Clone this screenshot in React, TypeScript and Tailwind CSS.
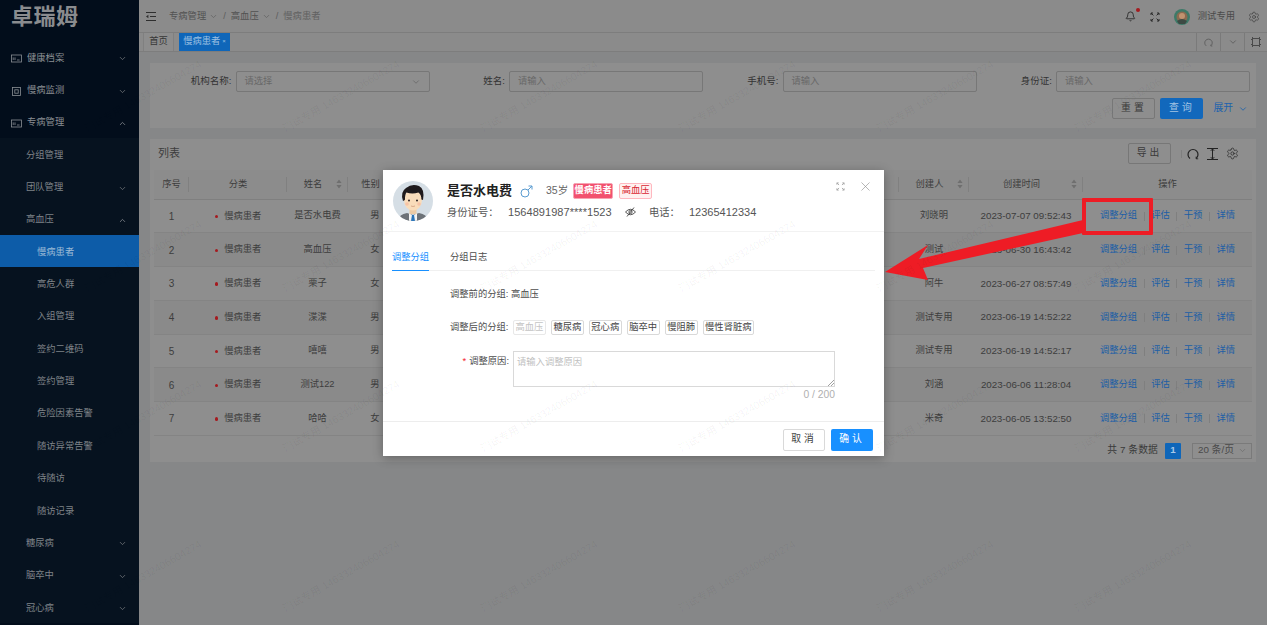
import React from "react";
import { ChevronDown, ChevronUp, X, Bell, Settings } from "lucide-react";

const FONT = '"Liberation Sans","Noto Sans CJK SC",sans-serif';

function CardIcon({ kind }: { kind: number }) {
  return (
    <svg width="11" height="9" viewBox="0 0 11 9" fill="none" stroke="#8b8f94" strokeWidth="0.8" className="shrink-0">
      {kind === 1 ? (
        <>
          <rect x="1.5" y="0.5" width="8" height="8" />
          <rect x="3.8" y="2.8" width="3.4" height="3.4" />
        </>
      ) : (
        <>
          <rect x="0.5" y="1" width="10" height="7" />
          <path d="M2.2 6V3.4M4 6V3.4M6 6h2.6" />
        </>
      )}
    </svg>
  );
}

const menu: { t: string; lv: number; icon?: number; arrow?: "d" | "u"; active?: boolean }[] = [
  { t: "健康档案", lv: 0, icon: 0, arrow: "d" },
  { t: "慢病监测", lv: 0, icon: 1, arrow: "d" },
  { t: "专病管理", lv: 0, icon: 0, arrow: "u" },
  { t: "分组管理", lv: 1 },
  { t: "团队管理", lv: 1, arrow: "d" },
  { t: "高血压", lv: 1, arrow: "u" },
  { t: "慢病患者", lv: 2, active: true },
  { t: "高危人群", lv: 2 },
  { t: "入组管理", lv: 2 },
  { t: "签约二维码", lv: 2 },
  { t: "签约管理", lv: 2 },
  { t: "危险因素告警", lv: 2 },
  { t: "随访异常告警", lv: 2 },
  { t: "待随访", lv: 2 },
  { t: "随访记录", lv: 2 },
  { t: "糖尿病", lv: 1, arrow: "d" },
  { t: "脑卒中", lv: 1, arrow: "d" },
  { t: "冠心病", lv: 1, arrow: "d" },
];

function Sidebar() {
  return (
    <aside className="w-[139px] shrink-0 h-full bg-[#020d1b] overflow-hidden flex flex-col">
      <div className="h-[41px] shrink-0 pl-[11px] pb-[7px] flex items-center text-[22px] leading-none font-bold text-[#8a8c8f] tracking-[0.5px]">
        卓瑞姆
      </div>
      {menu.map((m, i) => (
        <div
          key={i}
          className={
            "h-[32.35px] shrink-0 flex items-center pt-[3px] text-[9.3px] " +
            (m.active ? "bg-[#0d5ca8] text-[#9dbbd6] " : i < 3 ? "text-[#8b8f94] " : "bg-[#06121f] text-[#7f8388] ") +
            (m.lv === 0 ? "pl-[11px]" : m.lv === 1 ? "pl-[26px]" : "pl-[37px]")
          }
        >
          {m.icon !== undefined && (
            <span className="mr-[5px] flex">
              <CardIcon kind={m.icon} />
            </span>
          )}
          <span className="flex-1">{m.t}</span>
          {m.arrow === "d" && <ChevronDown size={9} className="mr-[12px] text-[#75797e]" />}
          {m.arrow === "u" && <ChevronUp size={9} className="mr-[12px] text-[#8b8f94]" />}
        </div>
      ))}
    </aside>
  );
}

function Expand({ c, s = 10 }: { c: string; s?: number }) {
  return (
    <svg width={s} height={s} viewBox="0 0 10 10" fill="none" stroke={c} strokeWidth="1">
      <path d="M1 3V1h2M1 1l2.4 2.4M9 3V1H7M9 1L6.6 3.4M1 7v2h2M1 9l2.4-2.4M9 7v2H7M9 9L6.6 6.6" />
    </svg>
  );
}

function Reload({ c, s = 12 }: { c: string; s?: number }) {
  return (
    <svg width={s} height={s} viewBox="0 0 12 12" fill="none" stroke={c} strokeWidth="1.2">
      <path d="M3 10.5A5 5 0 1 1 9 10.5" />
      <path d="M9.2 8.6v2.2h2" strokeWidth="0.9" />
    </svg>
  );
}

function TopBar() {
  return (
    <header className="h-[32px] shrink-0 bg-[#8b8b8b] flex items-center pt-[1px] text-[9.3px] text-[#525252]">
      <svg width="10" height="9" viewBox="0 0 10 9" className="ml-[7px] mr-[13px]" stroke="#2e2e2e" strokeWidth="1" fill="#2e2e2e">
        <path d="M0 .5h10M4 4.5h6M0 8.5h10" />
        <path d="M2.4 2.8v3.4L0 4.5z" stroke="none" />
      </svg>
      <span>专病管理</span>
      <ChevronDown size={9} className="ml-[3px] text-[#626262]" />
      <span className="mx-[5px] text-[#5c5c5c]">/</span>
      <span>高血压</span>
      <ChevronDown size={9} className="ml-[3px] text-[#626262]" />
      <span className="mx-[5px] text-[#5c5c5c]">/</span>
      <span className="text-[#616161]">慢病患者</span>
      <div className="ml-auto flex items-center">
        <span className="relative flex mr-[14px]">
          <Bell size={11} className="text-[#2b2b2b]" />
          <span className="absolute -right-[4px] -top-[3px] w-[4px] h-[4px] rounded-full bg-[#a51a1f]" />
        </span>
        <Expand c="#2b2b2b" s={10} />
        <svg width="16" height="16" viewBox="0 0 16 16" className="ml-[14px]">
          <circle cx="8" cy="8" r="8" fill="#3d7a68" />
          <circle cx="8" cy="8" r="5.5" fill="#8a6a50" />
          <circle cx="8" cy="7" r="3" fill="#c0936f" />
          <path d="M3 12q5-4 10 0l-2 3H5z" fill="#3d4a44" />
        </svg>
        <span className="ml-[8px] text-[#4a4a4a]">测试专用</span>
        <Settings size={12} className="ml-[13px] mr-[7px] text-[#3a3a3a]" strokeWidth={1.3} />
      </div>
    </header>
  );
}

function TabBar() {
  return (
    <div className="h-[20px] shrink-0 bg-[#8b8b8b] border-t border-b border-[#7d7d7d] flex items-stretch text-[9.3px]">
      <div className="ml-[4px] w-[31px] border-x border-[#808080] flex items-center justify-center text-[#383838] bg-[#8d8d8d]">
        首页
      </div>
      <div className="ml-[5px] w-[51px] bg-[#0f66b9] flex items-center justify-center text-[#9cc0e2] gap-[2px]">
        慢病患者<span className="text-[6px] leading-none mb-[3px]">×</span>
      </div>
      <div className="ml-auto flex">
        <div className="w-[24px] border-l border-[#7a7a7a] flex items-center justify-center">
          <Reload c="#5c5c5c" s={9} />
        </div>
        <div className="w-[24px] border-l border-[#7a7a7a] flex items-center justify-center">
          <ChevronDown size={10} className="text-[#5c5c5c]" />
        </div>
        <div className="w-[23px] border-l border-[#7a7a7a] flex items-center justify-center">
          <svg width="10" height="10" viewBox="0 0 10 10" fill="none" stroke="#4a4a4a" strokeWidth="1">
            <path d="M1.5 0v2.5H0M8.5 0v2.5H10M1.5 10V7.5H0M8.5 10V7.5H10M1.5 1.5h7v7h-7z" />
          </svg>
        </div>
      </div>
    </div>
  );
}

function Field({ label, ph, select }: { label: string; ph: string; select?: boolean }) {
  return (
    <div className="flex items-center justify-end">
      <span className="text-[#333333] mr-[4px] whitespace-nowrap text-[9.5px]">{label}:</span>
      <div className="w-[194px] h-[21px] border border-[#777777] rounded-[2px] flex items-center px-[8px] text-[#686868] text-[9.3px]">
        <span className="flex-1">{ph}</span>
        {select && <ChevronDown size={10} className="text-[#6a6a6a]" />}
      </div>
    </div>
  );
}

function Search() {
  return (
    <section className="h-[65px] bg-[#8e8e8e] pt-[8px] px-[6px]">
      <div className="grid grid-cols-4">
        <Field label="机构名称" ph="请选择" select />
        <Field label="姓名" ph="请输入" />
        <Field label="手机号" ph="请输入" />
        <Field label="身份证" ph="请输入" />
      </div>
      <div className="mt-[6px] flex justify-end items-center text-[9.8px]">
        <button className="w-[43px] h-[21px] border border-[#777777] rounded-[2px] text-[#3a3a3a] tracking-[3px]">重置</button>
        <button className="ml-[5px] w-[43px] h-[21px] bg-[#1268bc] rounded-[2px] text-[#a3c4e4] tracking-[3px]">查询</button>
        <span className="ml-[10px] mr-[2px] text-[#1c62ad] flex items-center gap-[5px]">
          展开
          <ChevronDown size={10} strokeWidth={2} />
        </span>
      </div>
    </section>
  );
}

const rows = [
  ["是否水电费", "男", "刘晓明", "2023-07-07 09:52:43"],
  ["高血压", "女", "测试", "2023-06-30 16:43:42"],
  ["栗子", "女", "阿牛", "2023-06-27 08:57:49"],
  ["渫渫", "男", "测试专用", "2023-06-19 14:52:22"],
  ["嘻嘻", "男", "测试专用", "2023-06-19 14:52:17"],
  ["测试122", "男", "刘涵", "2023-06-06 11:28:04"],
  ["哈哈", "女", "米奇", "2023-06-05 13:52:50"],
];

function Sort() {
  return (
    <svg width="6" height="9" viewBox="0 0 6 9" fill="#6f6f6f" className="inline-block">
      <path d="M3 0l2.6 3.4H.4zM3 9L.4 5.6h5.2z" />
    </svg>
  );
}

function Th({ children, sep = true, sort }: { children?: React.ReactNode; sep?: boolean; sort?: boolean }) {
  return (
    <th className={"relative font-normal bg-[#8c8c8c] border-b border-[#7f7f7f] pt-[1px] px-0 " + (sort ? "pr-[9px]" : "")}>
      {children}
      {sort && (
        <span className="absolute right-[6px] top-1/2 -translate-y-1/2 flex">
          <Sort />
        </span>
      )}
      {sep && <span className="absolute right-0 top-[7px] h-[15px] w-px bg-[#808080]" />}
    </th>
  );
}

function Table() {
  return (
    <table className="table-fixed w-[1098px] ml-[4px] border-collapse text-[9.3px] text-[#3d3d3d] text-center">
      <colgroup>
        <col className="w-[35px]" />
        <col className="w-[98px]" />
        <col className="w-[61px]" />
        <col className="w-[54px]" />
        <col className="w-[497px]" />
        <col className="w-[70px]" />
        <col className="w-[114px]" />
        <col className="w-[169px]" />
      </colgroup>
      <thead>
        <tr className="h-[29px]">
          <Th>序号</Th>
          <Th>分类</Th>
          <Th sort>姓名</Th>
          <Th sort>性别</Th>
          <Th />
          <Th sort>创建人</Th>
          <Th sort>创建时间</Th>
          <Th sep={false}>操作</Th>
        </tr>
      </thead>
      <tbody>
        {rows.map((r, i) => (
          <tr
            key={i}
            className={"h-[33.75px] border-b border-[#848484] [&>td]:pt-[1px] " + (i % 2 === 1 ? "bg-[#8a8a8a]" : "")}
          >
            <td className="text-[10px]">{i + 1}</td>
            <td>
              <span className="inline-flex items-center">
                <span className="w-[3.5px] h-[3.5px] rounded-full bg-[#a51a1f] mr-[6px]" />
                慢病患者
              </span>
            </td>
            <td>{r[0]}</td>
            <td>{r[1]}</td>
            <td />
            <td>{r[2]}</td>
            <td className="text-[9.8px]">{r[3]}</td>
            <td className="text-[#1c5ea6]">
              <span className="flex justify-end pr-[17px] items-center">
                调整分组
                <i className="mx-[6.5px] w-px h-[9px] bg-[#7f7f7f]" />
                评估
                <i className="mx-[6.5px] w-px h-[9px] bg-[#7f7f7f]" />
                干预
                <i className="mx-[6.5px] w-px h-[9px] bg-[#7f7f7f]" />
                详情
              </span>
            </td>
          </tr>
        ))}
      </tbody>
    </table>
  );
}

function List() {
  return (
    <section className="mt-[11px] h-[323px] bg-[#8e8e8e]">
      <div className="h-[31px] pb-[2px] flex items-center pl-[8px] text-[#3d3d3d] text-[11px]">
        列表
        <div className="ml-auto flex items-center">
          <button className="w-[43px] h-[21px] border border-[#777777] rounded-[2px] text-[9.8px] tracking-[3px] text-[#3a3a3a]">导出</button>
          <i className="ml-[10px] mr-[5px] w-px h-[8px] bg-[#7f7f7f]" />
          <span className="flex mr-[8px]">
            <Reload c="#222222" />
          </span>
          <svg width="11" height="12" viewBox="0 0 11 12" fill="none" stroke="#222222" strokeWidth="1" className="mr-[8px]">
            <path d="M0 .5h11M0 11.5h11M5.5 1v10M3.8 2.8L5.5 1l1.7 1.8M3.8 9.2L5.5 11l1.7-1.8" />
          </svg>
          <Settings size={13} className="mr-[17px] text-[#222222]" strokeWidth={1.3} />
        </div>
      </div>
      <Table />
      <div className="mt-[7px] flex items-center justify-end pr-[4px] text-[9.8px] text-[#3a3a3a]">
        <span className="tracking-[0.1px]">共 7 条数据</span>
        <span className="ml-[7px] w-[16px] h-[16px] bg-[#0f66b9] rounded-[1px] text-[#a8c9e8] font-bold flex items-center justify-center">1</span>
        <span className="ml-[11px] w-[60px] h-[16px] border border-[#7a7a7a] flex items-center pl-[5px] text-[#4a4a4a]">
          20 条/页
          <ChevronDown size={9} className="ml-[4px] text-[#6f6f6f]" />
        </span>
      </div>
    </section>
  );
}

function Avatar() {
  return (
    <svg width="40" height="40" viewBox="0 0 40 40" className="shrink-0">
      <clipPath id="a">
        <circle cx="20" cy="20" r="20" />
      </clipPath>
      <g clipPath="url(#a)">
        <rect width="40" height="40" fill="#d5dee5" />
        <path d="M5 40q1-7 9-8l6 2 6-2q8 1 9 8z" fill="#6d7278" />
        <path d="M16 32l4 3 4-3v8h-8z" fill="#f4f4f4" />
        <path d="M19 34h2l1 6h-4z" fill="#2a74b8" />
        <rect x="16.5" y="26" width="7" height="7" fill="#eccba6" />
        <ellipse cx="20" cy="19" rx="9" ry="10.5" fill="#f9dcba" />
        <path d="M10 20q-3-9 3-13 6-5 13-2 6 3 4 14l-1.600-.5q0-5-3-7-6 2-12 0-1.500 2-1.500 7.500z" fill="#1f1a1c" />
        <circle cx="16" cy="19.500" r="1" fill="#2a2224" />
        <circle cx="24" cy="19.500" r="1" fill="#2a2224" />
        <circle cx="14" cy="23" r="1.800" fill="#f6c3a6" />
        <circle cx="26" cy="23" r="1.800" fill="#f6c3a6" />
        <path d="M18 25q2 1 4 0" stroke="#c48a6c" strokeWidth=".6" fill="none" />
      </g>
    </svg>
  );
}

function Chip({ children, off }: { children: React.ReactNode; off?: boolean }) {
  return (
    <span
      className={
        "h-[15px] px-[1.5px] flex items-center border rounded-[2px] text-[9.3px] whitespace-nowrap " +
        (off ? "border-[#e8e8e8] text-[#c4c4c4]" : "border-[#d9d9d9] text-[#444444]")
      }
    >
      {children}
    </span>
  );
}

function Modal() {
  return (
    <div className="absolute left-[383px] top-[170px] w-[501px] h-[286px] bg-white shadow-[0_2px_10px_rgba(0,0,0,0.3)] flex flex-col text-[#4d4d4d]">
      <div className="h-[62px] shrink-0 border-b border-[#f2f2f2] flex pl-[10px] pt-[11px] relative">
        <Avatar />
        <div className="ml-[14px]">
          <div className="flex items-center h-[20px]">
            <span className="text-[13px] font-bold text-[#222222] w-[66px] whitespace-nowrap">是否水电费</span>
            <svg width="13" height="13" viewBox="0 0 13 13" fill="none" stroke="#5a9bd0" strokeWidth="1" className="ml-[7px]">
              <circle cx="5" cy="8" r="4" />
              <path d="M8 5l4-4M8.500 1H12v3.500" />
            </svg>
            <span className="ml-[13px] text-[#666666] text-[10.5px]">35岁</span>
            <span className="ml-[5px] w-[40px] h-[16px] bg-[#f2516f] border border-[#f7a3b3] rounded-[2px] text-white text-[9.3px] font-bold flex items-center justify-center">慢病患者</span>
            <span className="ml-[6px] w-[33px] h-[16px] bg-[#fff1f0] border border-[#ffb8c0] rounded-[2px] text-[#d81e32] text-[9.3px] flex items-center justify-center">高血压</span>
          </div>
          <div className="mt-[3px] flex items-center text-[10.3px] text-[#555555]">
            <span className="w-[61px]">身份证号：</span>
            <span className="w-[105px] text-[11px] whitespace-nowrap tracking-[0.05px]">1564891987****1523</span>
            <svg width="11" height="10" viewBox="0 0 11 10" fill="none" stroke="#444444" strokeWidth="0.9" className="ml-[12px]">
              <path d="M.5 5q5-5.500 10 0-5 5.500-10 0z" />
              <circle cx="5.500" cy="5" r="1.600" />
              <path d="M9 .5L2 9.500" />
            </svg>
            <span className="ml-[13px] w-[40px]">电话：</span>
            <span className="text-[11px]">12365412334</span>
          </div>
        </div>
        <span className="absolute left-[453px] top-[12px]">
          <Expand c="#a6a6a6" s={9} />
        </span>
        <X size={15} strokeWidth={1} className="absolute left-[475px] top-[9px] text-[#8c8c8c]" />
      </div>

      <div className="mx-[9px] h-[39px] shrink-0 border-b border-[#f0f0f0] flex text-[9.3px]">
        <span className="h-[39px] w-[37px] pt-[13px] border-b-[1.500px] border-[#1890ff] text-[#1890ff] flex items-center justify-center whitespace-nowrap">调整分组</span>
        <span className="ml-[21px] h-[39px] pt-[13px] flex items-center">分组日志</span>
      </div>

      <div className="flex-1 pl-[67px] text-[9.3px]">
        <div className="mt-[18px] h-[12px] flex items-center">调整前的分组: 高血压</div>
        <div className="mt-[19px] flex items-center">
          <span className="w-[63px] whitespace-nowrap">调整后的分组:</span>
          <div className="flex gap-[5px]">
            <Chip off>高血压</Chip>
            <Chip>糖尿病</Chip>
            <Chip>冠心病</Chip>
            <Chip>脑卒中</Chip>
            <Chip>慢阻肺</Chip>
            <Chip>慢性肾脏病</Chip>
          </div>
        </div>
        <div className="mt-[16px] flex items-start">
          <span className="w-[59px] mr-[4px] text-right whitespace-nowrap pt-[4px]">
            <span className="text-[#f5222d] mr-[3px]">*</span>调整原因:
          </span>
          <div className="w-[322px]">
            <div className="relative h-[36px] border border-[#d9d9d9] px-[3px] pt-[4px] text-[#bfbfbf]">
              请输入调整原因
              <svg width="6" height="6" viewBox="0 0 6 6" stroke="#777777" strokeWidth="0.7" className="absolute right-0 bottom-0">
                <path d="M0 6l6-6M3 6l3-3" />
              </svg>
            </div>
            <div className="text-right text-[10.300px] text-[#b0b0b0]">0 / 200</div>
          </div>
        </div>
      </div>

      <div className="h-[35px] shrink-0 border-t border-[#ededed] flex items-center justify-end pr-[11px] text-[9.8px] tracking-[3px] pt-[1px]">
        <button className="w-[42px] h-[22px] border border-[#d9d9d9] rounded-[2px] text-[#444444]">取消</button>
        <button className="ml-[6px] w-[42px] h-[22px] bg-[#1890ff] rounded-[2px] text-white">确认</button>
      </div>
    </div>
  );
}

function Annotation() {
  return (
    <>
      <div className="absolute left-[1082px] top-[198px] w-[71px] h-[37px] border-[4px] border-[#ee1c25] rounded-[1px]" />
      <svg width="1267" height="625" className="absolute left-0 top-0 pointer-events-none">
        <polygon points="885,272 928,245 919,259 1083,220 1083,233 923,268 928,280" fill="#ee1c25" />
      </svg>
    </>
  );
}

function Watermarks() {
  const marks: { x: number; y: number }[] = [];
  for (let r = 0; r < 4; r++) for (let c = 0; c < 6; c++) marks.push({ x: 86 + c * 198, y: 122 + r * 160 });
  return (
    <div className="absolute inset-0 overflow-hidden pointer-events-none">
      {marks.map((m, i) => (
        <span
          key={i}
          className="absolute text-[10.5px] whitespace-nowrap text-black/[0.05] origin-left -rotate-[30deg]"
          style={{ left: m.x, top: m.y }}
        >
          测试专用 146332406604274
        </span>
      ))}
    </div>
  );
}

export default function App() {
  return (
    <div className="relative w-[1267px] h-[625px] overflow-hidden flex bg-[#868788]" style={{ fontFamily: FONT }}>
      <Sidebar />
      <main className="flex-1 flex flex-col min-w-0">
        <TopBar />
        <TabBar />
        <div className="pt-[11px] pl-[11px] pr-[11px]">
          <Search />
          <List />
        </div>
      </main>
      <Modal />
      <Annotation />
      <Watermarks />
    </div>
  );
}
